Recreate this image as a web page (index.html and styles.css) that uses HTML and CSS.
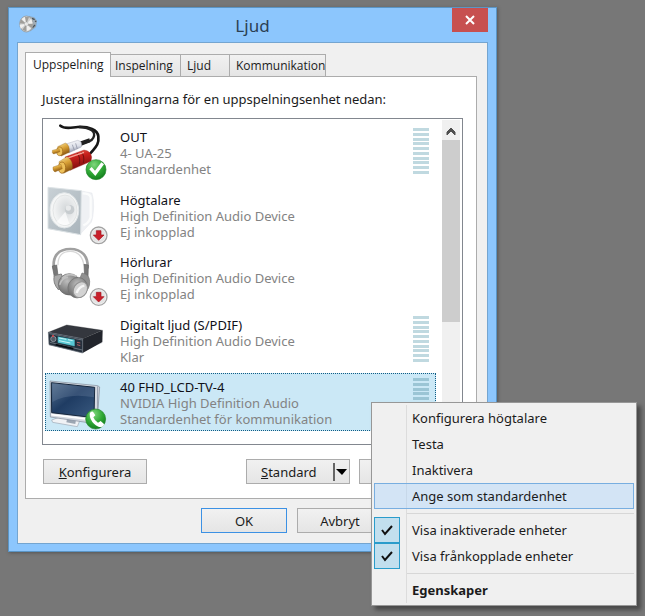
FILE: index.html
```html
<!DOCTYPE html>
<html lang="sv">
<head>
<meta charset="utf-8">
<meta name="viewport" content="width=device-width, initial-scale=1">
<title>Ljud</title>
<link rel="stylesheet" href="styles.css">
</head>
<body>
<svg class="defs" aria-hidden="true">
  <defs>
    <linearGradient id="gold" x1="0" y1="0" x2="0.4" y2="1"><stop offset="0" stop-color="#fbe7a0"/><stop offset=".5" stop-color="#d9a136"/><stop offset="1" stop-color="#8a5510"/></linearGradient>
    <linearGradient id="silver" x1="0" y1="0" x2="0.3" y2="1"><stop offset="0" stop-color="#ffffff"/><stop offset=".6" stop-color="#dcdfe8"/><stop offset="1" stop-color="#8e93a6"/></linearGradient>
    <linearGradient id="red" x1="0" y1="0" x2="0.3" y2="1"><stop offset="0" stop-color="#f2705c"/><stop offset=".4" stop-color="#c9211c"/><stop offset="1" stop-color="#7d0d0d"/></linearGradient>
    <radialGradient id="green" cx=".4" cy=".25" r=".8"><stop offset="0" stop-color="#7fd67c"/><stop offset=".55" stop-color="#2fa835"/><stop offset="1" stop-color="#117a1c"/></radialGradient>
    <linearGradient id="panel" x1="0" y1="0" x2="1" y2="1"><stop offset="0" stop-color="#c9d1d6"/><stop offset="1" stop-color="#a9b4bb"/></linearGradient>
    <radialGradient id="cone" cx=".55" cy=".45" r=".6"><stop offset="0" stop-color="#d3d7d9"/><stop offset=".6" stop-color="#e9ebec"/><stop offset="1" stop-color="#f8f9f9"/></radialGradient>
    <linearGradient id="screen" x1="0" y1="0" x2="1" y2="1"><stop offset="0" stop-color="#56718f"/><stop offset=".45" stop-color="#1f3c63"/><stop offset="1" stop-color="#39597f"/></linearGradient>
    <radialGradient id="cup" cx=".4" cy=".35" r=".75"><stop offset="0" stop-color="#bdbdbd"/><stop offset=".6" stop-color="#838383"/><stop offset="1" stop-color="#636363"/></radialGradient>
    <g id="unplugged">
      <circle cx="176" cy="156" r="25" fill="#f4f4f4" stroke="#a3a3a3" stroke-width="4"/>
      <circle cx="176" cy="156" r="21" fill="#e4e4e4"/>
      <path d="M169 142h14v13h9l-16 16-16-16h9z" fill="#c9202b" stroke="#a5121d" stroke-width="2"/>
    </g>
    <symbol id="meter" viewBox="0 0 16 47">
      <path d="M0 0h16v3H0zM0 5h16v3H0zM0 10h16v3H0zM0 14h16v3H0zM0 19h16v3H0zM0 24h16v3H0zM0 29h16v3H0zM0 33h16v3H0zM0 38h16v3H0zM0 43h16v3H0z" fill="currentColor"/>
    </symbol>
  </defs>
</svg>

<main class="dialog">
  <header class="titlebar">
    <svg class="app-icon" viewBox="0 0 54 54" aria-hidden="true">
      <path d="M30 4l16 4 7 10-3 18-16 12z" fill="#a3afb7" stroke="#7b868c"/>
      <path d="M39 10l8 4M40 38l8-8M48 20l4-2" stroke="#46515a" stroke-width="4"/>
      <ellipse cx="22" cy="27" rx="20" ry="24" fill="#cfd1d1" stroke="#8c9194" stroke-width="2"/>
      <path d="M22 27L8 12l10-6zM22 27l15-16 4 14zM22 27l14 14-12 7zM22 27L5 41l-3-12z" fill="#f0f0ee"/>
      <path d="M22 27L18 6l12 0zM22 27l20 0-4 12zM22 27l-12 18 12 4zM22 27L2 25l4-12z" fill="#a09e99"/>
      <circle cx="22" cy="27" r="6" fill="#e8e8e6" stroke="#969b9d"/>
    </svg>
    <h1 class="title">Ljud</h1>
    <button class="close" type="button" aria-label="Stäng"><svg viewBox="0 0 10 10" aria-hidden="true"><path d="M1 1l8 8M9 1L1 9"/></svg></button>
  </header>

  <div class="client">
    <div class="tabs" role="tablist">
      <button class="tab tab-active" role="tab" aria-selected="true" type="button">Uppspelning</button>
      <button class="tab tab-in" role="tab" type="button">Inspelning</button>
      <button class="tab tab-sound" role="tab" type="button">Ljud</button>
      <button class="tab tab-com" role="tab" type="button">Kommunikation</button>
    </div>

    <section class="panel">
      <p class="intro">Justera inställningarna för en uppspelningsenhet nedan:</p>
      <div class="listbox">
        <ul class="devices">
          <li class="device">
            <svg class="device-icon" viewBox="18 27 192 168" aria-hidden="true">
              <path d="M61 32c14 12 34 5 52 4 34-2 60 8 62 28 3 26-10 34-23 50" fill="none" stroke="#161616" stroke-width="8" stroke-linecap="round"/>
              <path d="M117 36c36 2 52 14 43 32-6 12-18 13-34 16" fill="none" stroke="#242424" stroke-width="7"/>
              <path d="M118 80l30-10 3 12-27 10z" fill="#202020"/>
              <path d="M78 87l35-11q12 1 12 13l-1 7-38 18z" fill="url(#silver)" stroke="#888da0"/>
              <path d="M97 89l6 17M107 85l5 17" stroke="#858a9c" stroke-width="2"/>
              <path d="M53 95l23-11q14 6 12 28l-24 11q-12-7-11-28z" fill="url(#gold)" stroke="#936018"/>
              <ellipse cx="59" cy="109" rx="9" ry="13" fill="#edc15b" stroke="#9a651a" stroke-width="2"/>
              <path d="M37 106l20-5 3 9-19 7q-6-3-4-11z" fill="url(#gold)" stroke="#966319"/>
              <path d="M75 126l57-21q21 3 23 21l-2 13-63 27z" fill="url(#red)" stroke="#8e1511"/>
              <path d="M112 115q10 13 6 33M124 111q11 13 6 33" fill="none" stroke="#70100e" stroke-width="3"/>
              <path d="M80 130l52-18" stroke="#f6a598" stroke-width="4"/>
              <path d="M57 140l24-15q19 10 16 37l-26 13q-15-11-14-35z" fill="url(#gold)" stroke="#936018"/>
              <ellipse cx="66" cy="158" rx="11" ry="17" fill="#eec15a" stroke="#965e15" stroke-width="2"/>
              <path d="M39 156l24-8 4 13-22 10q-8-4-6-15z" fill="url(#gold)" stroke="#936018"/>
              <circle cx="168" cy="164" r="30" fill="url(#green)" stroke="#23872a" stroke-width="2"/>
              <path d="M148 163l7-7 10 11 19-25 8 6-26 35z" fill="#fff"/>
            </svg>
            <div class="device-text"><strong>OUT</strong><span>4- UA-25</span><span>Standardenhet</span></div>
            <svg class="meter" aria-hidden="true"><use href="#meter"/></svg>
          </li>
          <li class="device">
            <svg class="device-icon" viewBox="18 11 192 168" aria-hidden="true">
              <path d="M120 22l36 7q6 20 5 44-1 28-7 44l-34 36z" fill="#eff1f4" stroke="#dcdfe4"/>
              <path d="M128 30q22 0 24 12v60q-6 18-22 24" fill="none" stroke="#fbfcfc" stroke-width="7"/>
              <path d="M24 12l100 10-2 132-98-18z" fill="url(#panel)" stroke="#dce2e5" stroke-width="3"/>
              <ellipse cx="73" cy="81" rx="43" ry="53" fill="#f5f6f6" stroke="#e0e5e7" stroke-width="3"/>
              <ellipse cx="75" cy="81" rx="36" ry="46" fill="url(#cone)" stroke="#d9dcdd" stroke-width="2"/>
              <path d="M76 85l-26 31q20 17 38 5z" fill="#fff" opacity=".7"/>
              <circle cx="89" cy="79" r="14" fill="#c7cccf"/><circle cx="85" cy="74" r="8" fill="#e7e9ea"/>
              <use href="#unplugged"/>
            </svg>
            <div class="device-text"><strong>Högtalare</strong><span>High Definition Audio Device</span><span>Ej inkopplad</span></div>
          </li>
          <li class="device">
            <svg class="device-icon" viewBox="18 13 192 168" aria-hidden="true">
              <path d="M42 74C36 33 56 13 91 13s54 22 52 58" fill="none" stroke="#a0a0a0" stroke-width="8"/>
              <path d="M54 62c-1-28 13-42 37-42s39 19 40 42" fill="none" stroke="#d8d8d8" stroke-width="4"/>
              <path d="M37 64l13-3 4 31-11 5zM132 59l13 2-1 38-10-1z" fill="#777" stroke="#606060" stroke-width="2"/>
              <path d="M43 93q-6 22 13 43l18-20-10-28z" fill="#aaa" stroke="#808080" stroke-width="3"/>
              <path d="M126 85q22 3 23 25 1 24-17 35l-20-25z" fill="#909090" stroke="#747474" stroke-width="2"/>
              <ellipse cx="88" cy="119" rx="33" ry="32" fill="url(#cup)" stroke="#666" stroke-width="2"/>
              <path d="M66 101q19-19 44-6M59 120q8-23 25-22" fill="none" stroke="#c0c0c0" stroke-width="5"/>
              <ellipse cx="113" cy="129" rx="29" ry="31" transform="rotate(25 113 129)" fill="url(#cup)" stroke="#707070" stroke-width="2"/>
              <ellipse cx="121" cy="135" rx="20" ry="25" transform="rotate(32 121 135)" fill="#d3d3d3" stroke="#929292" stroke-width="3"/>
              <path d="M110 145q6-18 23-22" fill="none" stroke="#f6f6f6" stroke-width="7"/>
              <use href="#unplugged" y="1"/>
            </svg>
            <div class="device-text"><strong>Hörlurar</strong><span>High Definition Audio Device</span><span>Ej inkopplad</span></div>
          </li>
          <li class="device">
            <svg class="device-icon" viewBox="18 5 192 168" aria-hidden="true">
              <path d="M25 105l94 20 70-28-63-20z" fill="#c6c9ce" opacity=".7"/>
              <path d="M25 66l55-22 107 16-59 25z" fill="#34373e" stroke="#24262b"/>
              <path d="M128 85l60-25-1 35-59 33z" fill="#22252c"/>
              <path d="M25 66l103 19v43L27 103z" fill="#26303c" stroke="#6b737d" stroke-width="2"/>
              <path d="M28 70l99 19M30 96l97 23" stroke="#8a929c" stroke-width="2"/>
              <path d="M52 77l53 10v22l-53-11z" fill="#58c6d3" stroke="#15232e" stroke-width="2"/>
              <path d="M57 83l22 4M57 91l34 7M84 88l14 3" stroke="#c8f6f6" stroke-width="3"/>
              <circle cx="40" cy="86" r="8" fill="#525b66" stroke="#a8afb7" stroke-width="2"/>
              <circle cx="39" cy="77" r="3" fill="#e34548"/>
              <path d="M111 96l10 2M111 103l10 3" stroke="#ae5d62" stroke-width="3"/>
              <path d="M47 103l53 12" stroke="#080d12" stroke-width="5"/>
            </svg>
            <div class="device-text"><strong>Digitalt ljud (S/PDIF)</strong><span>High Definition Audio Device</span><span>Klar</span></div>
            <svg class="meter" aria-hidden="true"><use href="#meter"/></svg>
          </li>
          <li class="device device-selected" aria-current="true">
            <svg class="device-icon" viewBox="18 192 192 168" aria-hidden="true">
              <path d="M35 330l27-10 58 10-8 20-74-13z" fill="#f0f2f5" stroke="#9da7b3" stroke-width="2"/>
              <path d="M82 323l26 4-2 15-27-5z" fill="#9ca6b2"/>
              <path d="M30 213l143 14 6 4-8 108-6 2-134-20z" fill="#d4d9e1" stroke="#7f8998" stroke-width="2"/>
              <path d="M34 218l130 14-2 91-127-15z" fill="url(#screen)" stroke="#16273d" stroke-width="3"/>
              <path d="M37 220l126 13-1 29Q86 248 37 276z" fill="#8298b2" opacity=".25"/>
              <path d="M34 314l128 16" stroke="#fff" stroke-width="5"/>
              <path d="M173 229v82" stroke="#909baa" stroke-width="3"/>
              <circle cx="167" cy="327" r="30" fill="url(#green)" stroke="#23872a" stroke-width="2"/>
              <path d="M149 311q3-8 10-6l7 11-6 6q4 11 14 16l8-5 10 9q0 8-9 9-9 1-21-10-13-13-13-30z" fill="#fff"/>
            </svg>
            <div class="device-text"><strong>40 FHD_LCD-TV-4</strong><span>NVIDIA High Definition Audio</span><span>Standardenhet för kommunikation</span></div>
            <svg class="meter" aria-hidden="true"><use href="#meter"/></svg>
          </li>
        </ul>
        <div class="scrollbar" aria-hidden="true">
          <svg class="scroll-up" viewBox="0 0 18 20"><path d="M9 8l-4 4v3l4-4 4 4v-3z" fill="#505050" stroke="#505050"/></svg>
          <div class="scroll-thumb"></div>
        </div>
      </div>
      <div class="actions">
        <button class="button button-wide" type="button"><u>K</u>onfigurera</button>
        <button class="button button-wide button-split" type="button"><span><u>S</u>tandard</span><svg viewBox="0 0 16 18" aria-hidden="true"><path d="M1 0v18" stroke="#666" stroke-width="2"/><path d="M3 6h11l-5 6z"/></svg></button>
        <button class="button button-wide" type="button" aria-label="Egenskaper"></button>
      </div>
    </section>

    <footer class="footer">
      <button class="button button-default" type="button">OK</button>
      <button class="button" type="button">Avbryt</button>
    </footer>
  </div>
</main>

<div class="menu" role="menu">
  <button class="menu-item" role="menuitem" type="button">Konfigurera högtalare</button>
  <button class="menu-item" role="menuitem" type="button">Testa</button>
  <button class="menu-item" role="menuitem" type="button">Inaktivera</button>
  <button class="menu-item menu-hover" role="menuitem" type="button">Ange som standardenhet</button>
  <hr class="separator">
  <label class="menu-item menu-check"><input type="checkbox" checked><svg viewBox="0 0 12 11" aria-hidden="true"><path d="M1 5l3 4 7-8"/></svg>Visa inaktiverade enheter</label>
  <label class="menu-item menu-check"><input type="checkbox" checked><svg viewBox="0 0 12 11" aria-hidden="true"><path d="M1 5l3 4 7-8"/></svg>Visa frånkopplade enheter</label>
  <hr class="separator">
  <button class="menu-item menu-bold" role="menuitem" type="button">Egenskaper</button>
</div>
</body>
</html>
```
FILE: styles.css
```css
* { box-sizing: border-box; }

body {
  margin: 0;
  padding: 7px 8px;
  background: #777;
  color: #1b1b1b;
  font: 13px/16px "Noto Sans", "Open Sans", sans-serif;
}

button { font: inherit; color: inherit; padding: 0; }

.defs { position: absolute; width: 0; height: 0; }

.dialog {
  max-width: 489px;
  padding: 0 8px 7px;
  background: #8cc6fd;
  border: 1px solid #5b95c5;
  box-shadow: 1px 1px 3px #555;
}

.titlebar {
  display: grid;
  grid-template-columns: 36px 1fr 36px;
  height: 34px;
}

.app-icon { width: 18px; height: 18px; margin: 7px 2px; }

.title {
  margin: 0;
  font-size: 17px;
  line-height: 35px;
  font-weight: 400;
  text-align: center;
  color: #2b4052;
}

.close {
  height: 24px;
  display: grid;
  place-items: center;
  border: 0;
  background: #c75050;
}

.close svg { width: 10px; height: 10px; fill: none; stroke: #fff; stroke-width: 2; }

.client {
  padding: 9px 10px 10px 7px;
  background: #f0f0f0;
  border: 1px solid #74a5d0;
}

.tabs { display: flex; align-items: flex-end; }

.tab {
  height: 22px;
  padding: 0 4px;
  font-family: "Open Sans", "Noto Sans", sans-serif;
  font-size: 12px;
  text-align: left;
  white-space: nowrap;
  border: 1px solid #acacac;
  border-left-width: 0;
  border-bottom: 0;
  background: linear-gradient(#f1f1f1, #e5e5e5);
}

.tab-active {
  width: 86px;
  height: 25px;
  margin-bottom: -1px;
  padding: 0 7px 1px;
  border-left-width: 1px;
  background: #fff;
  position: relative;
}

.tab-in { width: 70px; }
.tab-sound { width: 49px; padding-left: 6px; }
.tab-com { width: 96px; padding-left: 6px; }

.panel {
  padding: 14px 13px 14px 16px;
  background: #fff;
  border: 1px solid #acacac;
}

.intro { margin: 0 0 11px; }

.listbox {
  display: flex;
  height: 327px;
  padding: 1px 2px;
  border: 1px solid #82878f;
}

.devices {
  flex: 1;
  display: flex;
  flex-direction: column;
  justify-content: space-between;
  margin: 0;
  padding: 3px 6px 12px 0;
  list-style: none;
}

.device {
  display: flex;
  align-items: flex-start;
  height: 58px;
  border: 1px solid transparent;
}

.device-selected { background: #cbe8f6; border: 1px dotted #0f5d85; }

.device-icon { flex: none; width: 64px; height: 56px; margin-right: 10px; overflow: visible; }

.device-text { flex: 1; padding-top: 5px; color: #838383; white-space: nowrap; }
.device-text strong, .device-text span { display: block; font-weight: 400; line-height: 16px; }
.device-text strong { color: #101018; }

.meter { flex: none; width: 16px; height: 47px; margin: 4px 6px 0 0; color: #c0d9e0; }
.device-selected .meter { color: #9bc5d5; }

.scrollbar { width: 18px; background: #f0f0f0; }
.scroll-up { display: block; width: 18px; height: 20px; }
.scroll-thumb { height: 182px; background: #cdcdcd; }

.actions { display: flex; gap: 9px; margin-top: 14px; padding-left: 1px; }

.button {
  width: 86px;
  height: 25px;
  border: 1px solid #acacac;
  background: linear-gradient(#f1f1f1, #e5e5e5);
}

.button-wide { width: 104px; }
.button-wide:first-child { margin-right: auto; }
.button-split { display: flex; align-items: center; justify-content: space-between; padding: 0 0 0 14px; }
.button-split svg { width: 16px; height: 18px; }
.button-default { border-color: #3c91e4; }

.footer { display: flex; justify-content: flex-end; gap: 10px; padding: 9px 94px 0 0; }

.menu {
  position: absolute;
  left: 371px;
  top: 402px;
  width: 266px;
  padding: 2px;
  background: #f0f0f0 linear-gradient(#dcdcdc, #dcdcdc) 34px 2px / 1px calc(100% - 4px) no-repeat;
  border: 1px solid #979797;
  box-shadow: 4px 4px 4px #333a;
}

.menu-item {
  display: flex;
  align-items: center;
  width: 100%;
  height: 26px;
  padding-left: 37px;
  border: 1px solid transparent;
  background: none;
  text-align: left;
}

.menu-hover { background: #a8d2fd66; border-color: #78aee0; }
.menu-bold { font-weight: 700; }

.menu-check { display: grid; grid-template-columns: 26px 1fr; gap: 12px; padding: 0; border: 0; }
.menu-check input, .menu-check svg { grid-area: 1 / 1; }
.menu-check input {
  appearance: none;
  width: 26px;
  height: 26px;
  margin: 0;
  background: #c2dfee;
  border: 1px solid #2a9ccb;
}
.menu-check svg { width: 12px; height: 11px; justify-self: center; fill: none; stroke: #111; stroke-width: 2; }

.separator { height: 1px; margin: 4px 0 3px 33px; border: 0; background: #d7d7d7; }
```
